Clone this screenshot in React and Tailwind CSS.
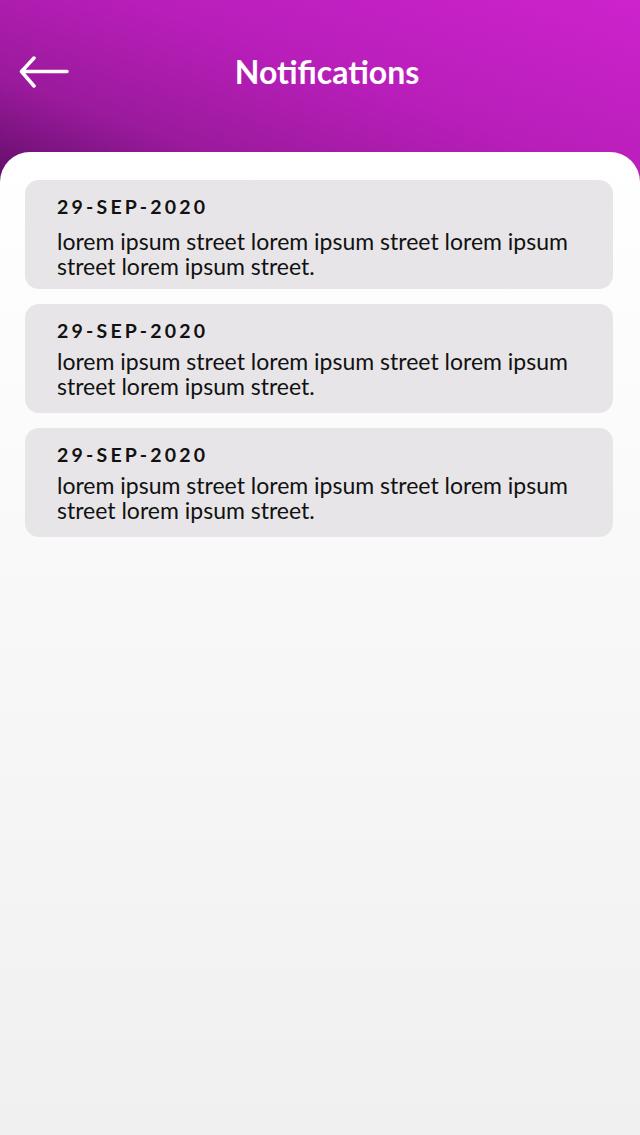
const items = [
  { id: 1, textGap: "mt-[8px]", bottom: "pb-[10px]" },
  { id: 2, textGap: "mt-[4px]", bottom: "pb-[14px]" },
  { id: 3, textGap: "mt-[4px]", bottom: "pb-[14px]" },
].map((n) => ({
  ...n,
  date: "29-SEP-2020",
  text: "lorem ipsum street lorem ipsum street lorem ipsum street lorem ipsum street.",
}));

function BackArrow() {
  return (
    <svg width="50" height="32" viewBox="0 0 50 32" fill="none">
      <path
        d="M48 15.5H3M15 2L2.5 15.5L15 30"
        stroke="white"
        strokeWidth="3.5"
        strokeLinecap="round"
        strokeLinejoin="round"
      />
    </svg>
  );
}

export default function App() {
  return (
    <div className="min-h-[1135px] w-[640px] font-['Lato','Noto_Sans',sans-serif]">
      <div className="h-[182px] bg-[linear-gradient(200deg,#cd23cd_0%,#b81eb9_45%,#9a1a9c_75%,#620e68_100%)]">
        <div className="relative flex h-[144px] items-center justify-center">
          <button className="absolute left-[19px] top-[56px]">
            <BackArrow />
          </button>
          <h1 className="ml-[14px] text-[32px] font-bold text-white">Notifications</h1>
        </div>
      </div>

      <div className="relative -mt-[30px] flex min-h-[983px] flex-col gap-[14.5px] rounded-t-[30px] bg-[linear-gradient(180deg,#ffffff_0%,#f0f0f0_100%)] pl-[25px] pr-[27px] pt-[28px]">
        {items.map((n) => (
          <div key={n.id} className={`rounded-[14px] bg-[#e7e5e8] pl-[32px] pr-[18px] pt-[12px] ${n.bottom}`}>
            <div className="text-[19.5px] font-bold tracking-[3.2px] text-[#111]">{n.date}</div>
            <p className={`text-[23px] leading-[25px] text-[#111] ${n.textGap}`}>{n.text}</p>
          </div>
        ))}
      </div>
    </div>
  );
}
